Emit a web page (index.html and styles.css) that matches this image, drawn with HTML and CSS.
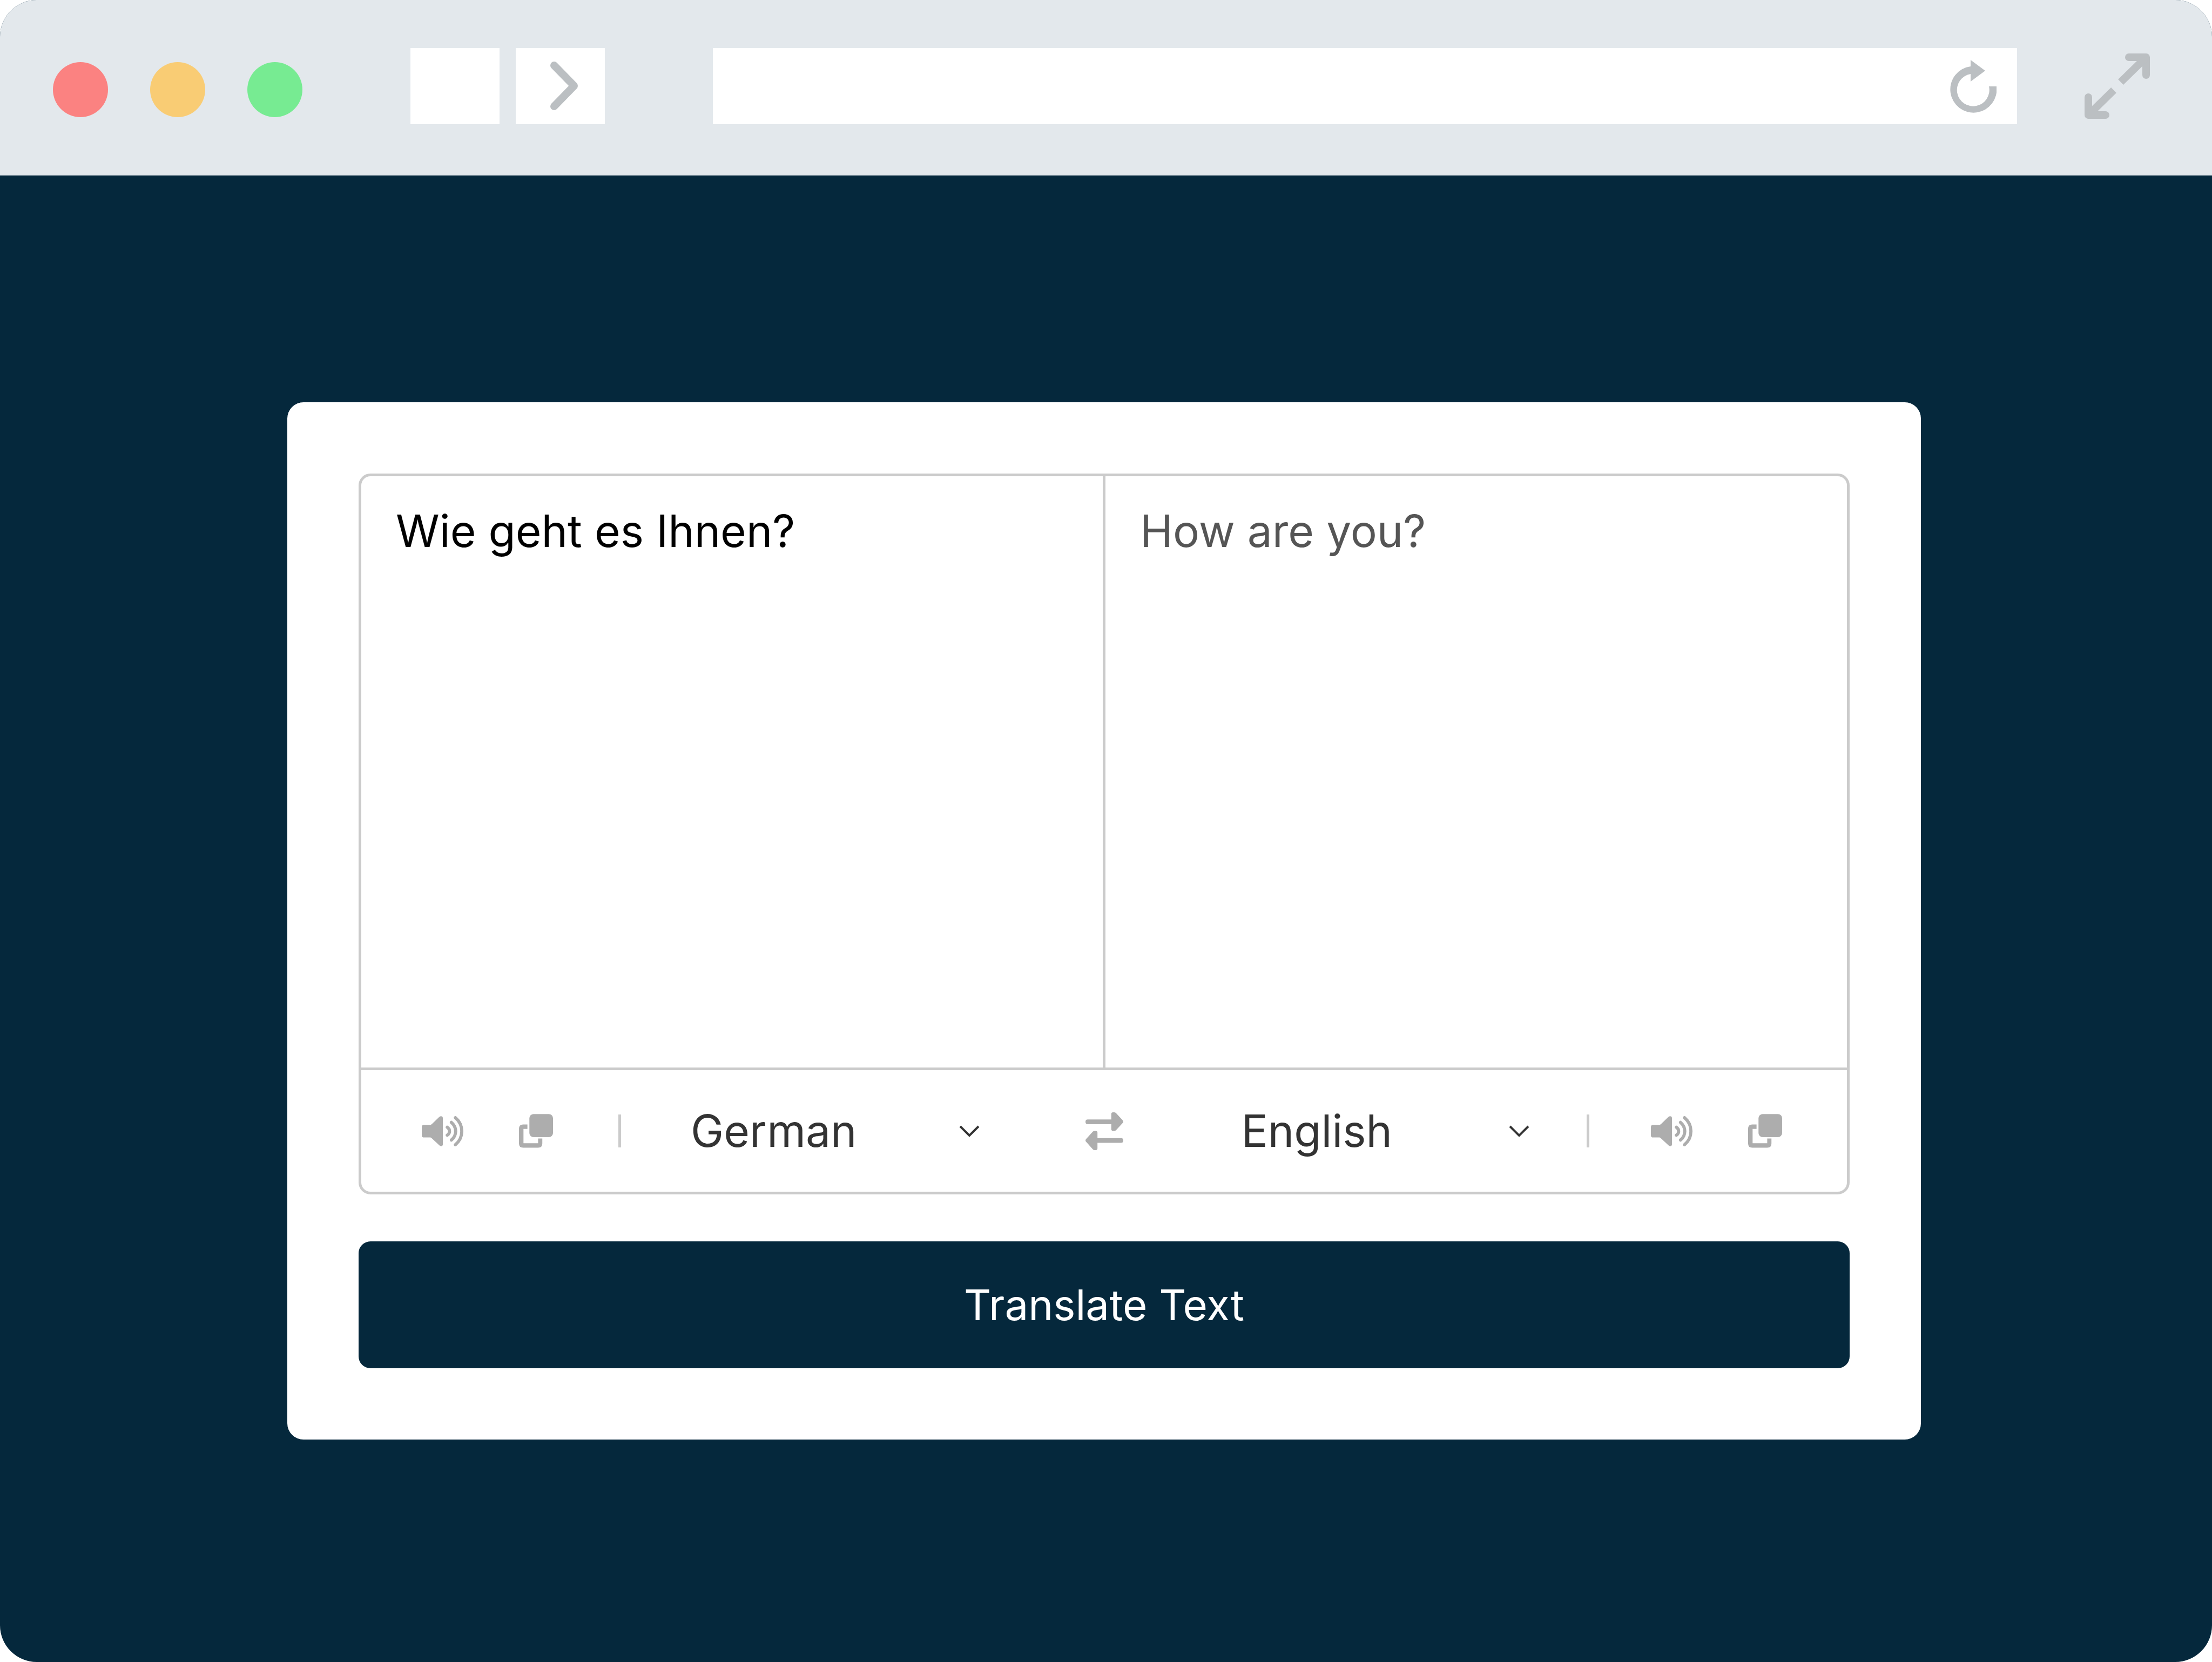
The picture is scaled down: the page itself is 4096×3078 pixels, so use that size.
FILE: index.html
```html
<!DOCTYPE html>
<html lang="en">
<head>
<meta charset="utf-8">
<title>Language Translator</title>
<link rel="stylesheet" href="styles.css">
</head>
<body>
<svg class="sprite" aria-hidden="true">
  <symbol id="icon-speaker" viewBox="36 72 292 210">
    <path fill="currentColor" d="M52 132H96Q102 132 107 127L160 76Q168 70 177 73Q184 76 184 84V270Q184 278 177 281Q168 284 160 277L107 227Q102 221 96 221H52Q36 221 36 205V148Q36 132 52 132Z"/>
    <g fill="none" stroke="currentColor" stroke-width="22" stroke-linecap="round">
      <path d="M215 149Q231 160 231 177Q231 194 215 205"/>
      <path d="M244 115Q274 140 274 177Q274 214 244 239"/>
      <path d="M272 82Q317 120 317 177Q317 234 272 272"/>
    </g>
  </symbol>
  <symbol id="icon-copy" viewBox="720 58 242 240">
    <rect x="794" y="58" width="168" height="164" rx="30" fill="currentColor"/>
    <path fill="currentColor" d="M780 132H750Q720 132 720 162V267Q720 297 750 297H856Q886 297 886 267V232H856V265H752V164H780Z"/>
  </symbol>
</svg>

<div class="window">
  <header class="toolbar">
    <div class="lights">
      <span class="light light-close"></span>
      <span class="light light-minimize"></span>
      <span class="light light-zoom"></span>
    </div>
    <nav class="history">
      <button class="nav-button" type="button" aria-label="Back"></button>
      <button class="nav-button" type="button" aria-label="Forward">
        <svg class="nav-icon" viewBox="0 0 164 141" aria-hidden="true">
          <path d="M70 32L107 70L70 108" fill="none" stroke="currentColor" stroke-width="14" stroke-linecap="round" stroke-linejoin="round"/>
        </svg>
      </button>
    </nav>
    <div class="address">
      <input class="address-input" type="text" aria-label="Address">
      <button class="reload" type="button" aria-label="Reload">
        <svg class="reload-icon" viewBox="0 0 86 98" aria-hidden="true">
          <path fill="currentColor" d="M38 0L65 20L38 40V26A30 30 0 1 0 72 49H86A43 43 0 1 1 38 12Z"/>
        </svg>
      </button>
    </div>
    <button class="expand" type="button" aria-label="Full screen">
      <svg class="expand-icon" viewBox="0 0 121 121" aria-hidden="true">
        <g fill="none" stroke="currentColor" stroke-width="14" stroke-linejoin="round">
          <path stroke-linecap="round" d="M82 7H114V40"/>
          <path d="M112 9L67 53"/>
          <path stroke-linecap="round" d="M39 114H7V81"/>
          <path d="M9 112L54 68"/>
        </g>
      </svg>
    </button>
  </header>

  <main class="page">
    <section class="card">
      <div class="translator">
        <div class="texts">
          <textarea class="text text-from" aria-label="Text to translate" spellcheck="false">Wie geht es Ihnen?</textarea>
          <textarea class="text text-to" aria-label="Translation" spellcheck="false" readonly>How are you?</textarea>
        </div>
        <div class="controls">
          <div class="side side-from">
            <button class="icon-button" type="button" aria-label="Listen to source text"><svg class="speaker"><use href="#icon-speaker"/></svg></button>
            <button class="icon-button" type="button" aria-label="Copy source text"><svg class="copy"><use href="#icon-copy"/></svg></button>
            <span class="rule"></span>
            <div class="picker">
              <select class="language" aria-label="Source language">
                <option selected>German</option>
                <option>English</option>
              </select>
              <svg class="chevron" viewBox="0 0 38 22" aria-hidden="true"><path d="M2 2L19 19L36 2" fill="none" stroke="currentColor" stroke-width="4"/></svg>
            </div>
          </div>
          <button class="icon-button" type="button" aria-label="Swap languages">
            <svg class="swap" viewBox="60 48 268 268" aria-hidden="true">
              <g fill="currentColor">
                <path d="M76 99H243V60Q243 48 255 48H263Q270 48 276 53L322 103Q334 115 322 126L276 175Q270 180 263 180H255Q243 180 243 168V132H76Q60 132 60 116Q60 99 76 99Z"/>
                <path d="M312 231H145V192Q145 180 133 180H125Q118 180 112 185L66 236Q54 248 66 259L112 310Q118 316 125 316H133Q145 316 145 304V264H312Q328 264 328 248Q328 231 312 231Z"/>
              </g>
            </svg>
          </button>
          <div class="side side-to">
            <div class="picker">
              <select class="language" aria-label="Target language">
                <option selected>English</option>
                <option>German</option>
              </select>
              <svg class="chevron" viewBox="0 0 38 22" aria-hidden="true"><path d="M2 2L19 19L36 2" fill="none" stroke="currentColor" stroke-width="4"/></svg>
            </div>
            <span class="rule"></span>
            <button class="icon-button" type="button" aria-label="Listen to translation"><svg class="speaker"><use href="#icon-speaker"/></svg></button>
            <button class="icon-button" type="button" aria-label="Copy translation"><svg class="copy"><use href="#icon-copy"/></svg></button>
          </div>
        </div>
      </div>
      <button class="translate" type="button">Translate Text</button>
    </section>
  </main>
</div>
</body>
</html>
```
FILE: styles.css
```css
* {
  box-sizing: border-box;
}

body {
  margin: 0;
  background: #fff;
  font-family: Inter, "Noto Sans", sans-serif;
}

button,
input,
select,
textarea {
  margin: 0;
  padding: 0;
  border: 0;
  border-radius: 0;
  outline: 0;
  background: none;
  font-family: inherit;
}

button {
  display: flex;
  align-items: center;
  justify-content: center;
}

svg {
  display: block;
}

.sprite {
  display: none;
}

.window {
  display: flex;
  flex-direction: column;
  min-height: 100vh;
  border-radius: 68px;
  overflow: hidden;
  background: #05283c;
}

/* Browser toolbar */

.toolbar {
  display: flex;
  align-items: flex-start;
  padding: 89px 115px 95px 98px;
  background: #e3e8ec;
  color: #bbbfc2;
}

.lights {
  display: flex;
  gap: 78px;
  padding-top: 26px;
}

.light {
  width: 102px;
  height: 102px;
  border-radius: 50%;
}

.light-close {
  background: #fb8281;
}

.light-minimize {
  background: #f9cc74;
}

.light-zoom {
  background: #77eb92;
}

.history {
  display: flex;
  gap: 30px;
  margin: 0 200px;
}

.nav-button {
  width: 165px;
  height: 141px;
  background: #fff;
  color: inherit;
}

.nav-icon {
  width: 164px;
  height: 141px;
}

.address {
  display: flex;
  flex: 1;
  align-items: center;
  height: 141px;
  padding-right: 38px;
  background: #fff;
}

.address-input {
  flex: 1;
  height: 100%;
  padding: 0 38px;
  font-size: 72px;
}

.reload,
.expand {
  color: inherit;
}

.reload-icon {
  width: 86px;
  height: 98px;
}

.expand {
  margin: 10px 0 0 125px;
}

.expand-icon {
  width: 121px;
  height: 121px;
}

/* Translator card */

.page {
  flex: 1;
  padding: 420px 539px 411px 532px;
}

.card {
  padding: 132px;
  border-radius: 30px;
  background: #fff;
}

.translator {
  border: 5px solid #cbcbcb;
  border-radius: 22px;
}

.texts {
  display: flex;
  border-bottom: 5px solid #cbcbcb;
}

.text {
  flex: 1;
  min-width: 0;
  height: 1095px;
  padding: 42px 64px;
  font-size: 82px;
  line-height: 120px;
  resize: none;
}

.text-from {
  border-right: 5px solid #cbcbcb;
  color: #000;
}

.text-to {
  color: #555;
}

.controls {
  display: grid;
  grid-template-columns: 1fr auto 1fr;
  align-items: center;
  height: 225px;
}

.side {
  display: flex;
  align-items: center;
  min-width: 0;
}

.side-from {
  padding: 0 196px 0 112px;
}

.side-to {
  padding: 0 120px 0 219px;
}

.icon-button {
  color: #adadad;
}

.speaker {
  width: 77px;
  height: 56px;
}

.copy {
  width: 63px;
  height: 63px;
}

.side .icon-button + .icon-button {
  margin-left: 103px;
}

.swap {
  width: 70px;
  height: 70px;
}

.rule {
  width: 5px;
  height: 61px;
  background: #cbcbcb;
}

.side-from .rule {
  margin: 0 129px 0 121px;
}

.side-to .rule {
  margin: 0 114px 0 106px;
}

.picker {
  display: grid;
  flex: 1;
  align-items: center;
  color: #333;
}

.language,
.chevron {
  grid-area: 1 / 1;
}

.language {
  width: 100%;
  appearance: none;
  color: inherit;
  font-size: 82px;
  line-height: 120px;
}

.chevron {
  justify-self: end;
  width: 38px;
  height: 22px;
  pointer-events: none;
}

.translate {
  width: 100%;
  height: 235px;
  margin-top: 87px;
  border-radius: 22px;
  background: #05283c;
  color: #fff;
  font-size: 78px;
}
```
